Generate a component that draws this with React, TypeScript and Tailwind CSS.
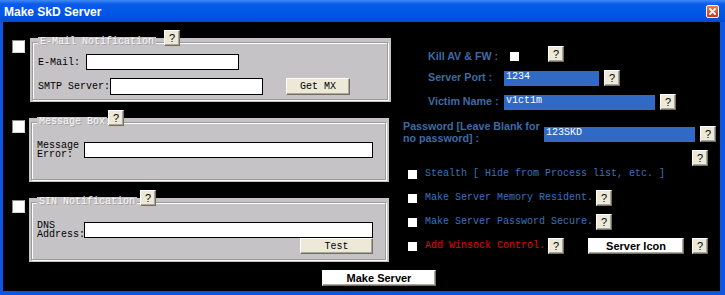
import React from 'react';

const mono = "font-['Liberation_Mono',monospace] text-[10px]";
const sans = "font-['Liberation_Sans',Arial,sans-serif]";

function Help({ className = '' }: { className?: string }) {
  return (
    <div
      className={`w-[16px] h-[16px] shrink-0 flex items-center justify-center bg-[#ece9d8] border border-t-white border-l-white border-b-[#716f64] border-r-[#716f64] shadow-[inset_-1px_-1px_0_#aca899] text-black text-[11px] leading-none ${sans} ${className}`}
    >
      ?
    </div>
  );
}

function CreamButton({ label, className = '' }: { label: string; className?: string }) {
  return (
    <div
      className={`flex items-center justify-center bg-[#ece9d8] border border-t-white border-l-white border-b-[#716f64] border-r-[#716f64] shadow-[inset_-1px_-1px_0_#aca899] text-black ${mono} ${className}`}
    >
      {label}
    </div>
  );
}

function WhiteButton({ label, className = '' }: { label: string; className?: string }) {
  return (
    <div
      className={`flex items-center justify-center bg-white border border-t-white border-l-white border-b-[#716f64] border-r-[#716f64] shadow-[inset_-1px_-1px_0_#aca899] text-black text-[11px] font-bold leading-none ${sans} ${className}`}
    >
      {label}
    </div>
  );
}

interface GroupProps {
  title: string;
  gap: string;
  width: string;
  helpPos: string;
  children: React.ReactNode;
}

function Group({ title, gap, width, helpPos, children }: GroupProps) {
  return (
    <div className="flex items-start">
      <div className="w-[13px] h-[13px] mt-[2px] shrink-0 bg-white border border-t-[#8a8a8a] border-l-[#8a8a8a] border-b-[#d6d6d6] border-r-[#d6d6d6]" />
      <div className={`relative h-[64px] ${gap} ${width} bg-[#c6c3c6] pt-[4px] pl-[2px] pr-[3px] pb-[2px] flex`}>
        <div className="relative flex-1 border border-[#9d9a97] shadow-[1px_1px_0_#fff,inset_1px_1px_0_#fff]">
          <div className={`absolute -top-[6px] left-[5px] px-[2px] bg-[#c6c3c6] leading-[10px] text-[#f7f7f7] [text-shadow:1px_1px_0_#a3a0a0] ${mono}`}>
            {title}
          </div>
          {children}
        </div>
        <Help className={`absolute -top-[8px] ${helpPos}`} />
      </div>
    </div>
  );
}

function BlueInput({ value, className = '' }: { value: string; className?: string }) {
  return (
    <div className={`h-[15px] bg-[#316ac5] text-white pl-[2px] leading-[12px] ${mono} ${className}`}>
      {value}
    </div>
  );
}

function OptionRow({
  text,
  color,
  className = '',
  children,
}: {
  text: string;
  color: string;
  className?: string;
  children?: React.ReactNode;
}) {
  return (
    <div className={`flex items-center h-[16px] ${className}`}>
      <div className="w-[9px] h-[9px] ml-[13px] bg-white shrink-0" />
      <span className={`ml-[8px] leading-[12px] whitespace-pre ${color} ${mono}`}>{text}</span>
      {children}
    </div>
  );
}

export default function App() {
  const label = `text-[#3d6ba6] text-[10.7px] font-bold leading-[12px] ${sans}`;

  return (
    <div className="w-[725px] h-[295px] flex flex-col overflow-hidden bg-black">
      {/* Title bar */}
      <div className="h-[22px] shrink-0 flex items-center justify-between pl-[4px] pr-[6px] bg-[linear-gradient(to_bottom,#3d8af7_0%,#0a5ce9_18%,#0055e5_70%,#004ad4_100%)]">
        <span className={`text-white text-[12px] font-bold leading-none pt-[1px] ${sans}`}>Make SkD Server</span>
        <div className="w-[13px] h-[13px] rounded-[2px] border border-white bg-[linear-gradient(to_bottom,#ee7a55,#c9391a)] flex items-center justify-center">
          <svg width="7" height="7" viewBox="0 0 7 7">
            <path d="M1 1 L6 6 M6 1 L1 6" stroke="white" strokeWidth="1.8" strokeLinecap="square" />
          </svg>
        </div>
      </div>

      {/* Body */}
      <div className="flex-1 flex flex-col bg-black border-l-[3px] border-r-[5px] border-b-[4px] border-[#0b56e4]">
        <div className="flex">
          {/* Left column */}
          <div className="w-[392px] shrink-0 pl-[9px] pt-[16px] flex flex-col gap-[16px]">
            <Group title="E-Mail Notification" gap="ml-[5px]" width="w-[361px]" helpPos="left-[134px]">
              <div className={`pt-[11px] pl-[5px] flex flex-col gap-[8px] text-black ${mono}`}>
                <div className="flex items-center">
                  <span className="w-[48px]">E-Mail:</span>
                  <div className="w-[153px] h-[16px] bg-white border border-black" />
                </div>
                <div className="flex items-center">
                  <span className="w-[72px]">SMTP Server:</span>
                  <div className="w-[153px] h-[17px] bg-white border border-black" />
                  <CreamButton label="Get MX" className="ml-[23px] w-[64px] h-[17px]" />
                </div>
              </div>
            </Group>

            <Group title="Message Box" gap="ml-[4px]" width="w-[360px]" helpPos="left-[79px]">
              <div className={`pt-[18px] pl-[5px] flex items-start text-black ${mono}`}>
                <div className="w-[47px] leading-[9px]">
                  Message
                  <br />
                  Error:
                </div>
                <div className="w-[289px] h-[16px] mt-[1px] bg-white border border-black" />
              </div>
            </Group>

            <Group title="SIN Notification" gap="ml-[4px]" width="w-[360px]" helpPos="left-[111px]">
              <div className={`pt-[18px] pl-[5px] flex items-start text-black ${mono}`}>
                <div className="w-[47px] leading-[9px]">
                  DNS
                  <br />
                  Address:
                </div>
                <div className="flex flex-col items-end mt-[1px]">
                  <div className="w-[289px] h-[16px] bg-white border border-black" />
                  <CreamButton label="Test" className="w-[73px] h-[16px]" />
                </div>
              </div>
            </Group>
          </div>

          {/* Right column */}
          <div className="flex-1 pt-[24px] flex flex-col">
            <div className="flex items-start h-[16px]">
              <span className={`ml-[33px] w-[82px] mt-[4px] whitespace-nowrap ${label}`}>Kill AV &amp; FW :</span>
              <div className="w-[9px] h-[9px] mt-[6px] bg-white" />
              <Help className="ml-[29px]" />
            </div>

            <div className="flex items-start h-[16px] mt-[8px]">
              <span className={`ml-[33px] w-[76px] mt-[1px] whitespace-nowrap ${label}`}>Server Port :</span>
              <BlueInput value="1234" className="w-[95px] mt-[1px]" />
              <Help className="ml-[5px]" />
            </div>

            <div className="flex items-start h-[16px] mt-[8px]">
              <span className={`ml-[33px] w-[76px] mt-[1px] whitespace-nowrap ${label}`}>Victim Name :</span>
              <BlueInput value="v1ct1m" className="w-[151px] mt-[1px]" />
              <Help className="ml-[5px]" />
            </div>

            <div className="flex items-start h-[24px] mt-[8px]">
              <span className={`ml-[8px] w-[141px] mt-[2px] whitespace-nowrap ${label}`}>
                Password [Leave Blank for
                <br />
                no password] :
              </span>
              <BlueInput value="123SKD" className="w-[151px] mt-[9px]" />
              <Help className="ml-[5px] mt-[8px]" />
            </div>

            <div className="flex mt-[8px]">
              <Help className="ml-[297px]" />
            </div>

            <OptionRow text="Stealth [ Hide from Process list, etc. ]" color="text-[#3a72bb]" />
            <OptionRow text="Make Server Memory Resident." color="text-[#3a72bb]" className="mt-[8px]">
              <Help className="ml-[3px]" />
            </OptionRow>
            <OptionRow text="Make Server Password Secure." color="text-[#3a72bb]" className="mt-[8px]">
              <Help className="ml-[3px]" />
            </OptionRow>
            <OptionRow text="Add Winsock Control." color="text-[#ee0000]" className="mt-[8px]">
              <Help className="ml-[3px]" />
              <WhiteButton label="Server Icon" className="ml-[24px] w-[96px] h-[16px]" />
              <Help className="ml-[8px]" />
            </OptionRow>
          </div>
        </div>

        {/* Bottom action */}
        <div className="flex mt-[8px]">
          <WhiteButton label="Make Server" className="ml-[319px] w-[114px] h-[16px]" />
        </div>
      </div>
    </div>
  );
}
